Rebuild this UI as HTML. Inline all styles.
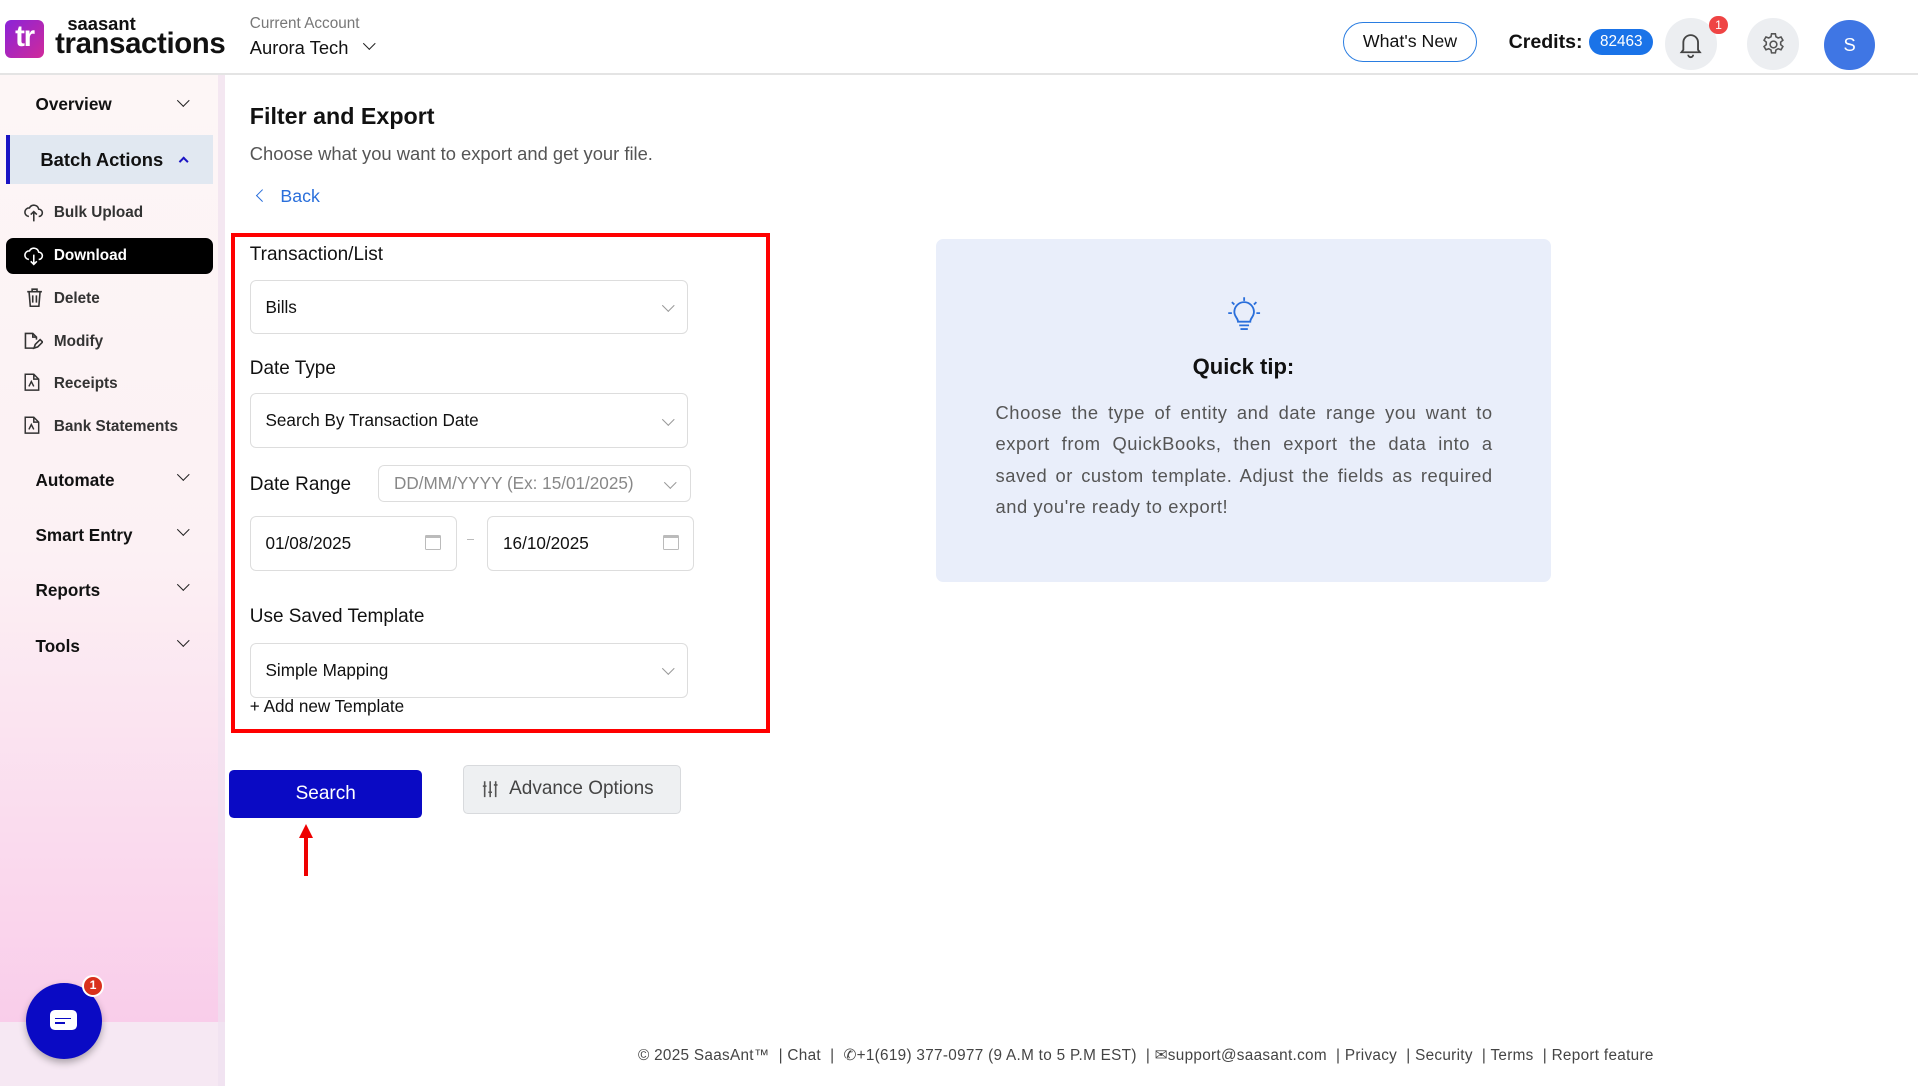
<!DOCTYPE html>
<html><head><meta charset="utf-8"><style>
*{box-sizing:border-box;margin:0;padding:0}
html,body{width:1920px;height:1086px;overflow:hidden;background:#fff}
#w{zoom:1.22449;width:1568px;height:887px;position:relative;font-family:"Liberation Sans",sans-serif;color:#111}
.a{position:absolute}
.side{left:0;top:61px;width:184px;height:774px;background:linear-gradient(#fdf6f6 0%,#fcf1f4 50%,#f9cdea 100%)}
.sideb{left:0;top:835px;width:184px;height:52px;background:#f6e8f3}
.strip{left:178px;top:61px;width:6px;height:826px;background:rgba(240,225,240,.7)}
.nav{font-weight:bold;font-size:14px;color:#111}
.chev{width:7px;height:7px;border-right:1.6px solid #222;border-bottom:1.6px solid #222;transform:rotate(45deg)}
.sub{font-size:12.5px;font-weight:bold;color:#333}
.lbl{font-size:15.5px;color:#111}
.sel{border:1px solid #ddd;border-radius:5px;background:#fff;font-size:14px;color:#111;padding-left:12px;display:flex;align-items:center}
.dd{position:absolute;right:12px;top:50%;width:7px;height:7px;border-right:1px solid #999;border-bottom:1px solid #999;transform:translateY(-70%) rotate(45deg)}
.cal{position:absolute;right:12px;top:15px;width:13px;height:12px;border:1px solid #bbb;border-top-width:3px;border-radius:1px}
.foot{font-size:12.5px;color:#444;letter-spacing:0.25px}
</style></head><body><div id="w">
<!-- header -->
<div class="a" style="left:0;top:60px;width:1566px;height:1px;background:#e4e4e4"></div>
<div class="a" style="left:4px;top:16px;width:32px;height:31px;border-radius:5px;background:linear-gradient(135deg,#8a23d8,#d02a9a);color:#fff;font-weight:bold;font-size:24px;line-height:28px;text-align:center;letter-spacing:-1px">tr</div>
<div class="a" style="left:55px;top:11px;font-size:15px;font-weight:bold;color:#111">saasant</div>
<div class="a" style="left:45px;top:22px;font-size:24px;font-weight:bold;color:#111;letter-spacing:-0.3px">transactions</div>
<div class="a" style="left:204px;top:12px;font-size:12.5px;color:#777">Current Account</div>
<div class="a" style="left:204px;top:30px;font-size:15px;color:#111">Aurora Tech</div>
<div class="a chev" style="left:298px;top:32px"></div>
<div class="a" style="left:1097px;top:18px;width:109px;height:33px;border:1px solid #2a7de1;border-radius:17px;font-size:14.5px;text-align:center;line-height:31px">What's New</div>
<div class="a" style="left:1232px;top:25px;font-size:16px;font-weight:bold">Credits:</div>
<div class="a" style="left:1298px;top:24px;width:52px;height:21px;border-radius:11px;background:#1a73e8;color:#fff;font-size:12.5px;text-align:center;line-height:21px">82463</div>
<div class="a" style="left:1360px;top:15px;width:42px;height:42px;border-radius:50%;background:#eceef1"></div>
<svg class="a" style="left:1369px;top:24px" width="24" height="24" viewBox="0 0 24 24" fill="none" stroke="#444" stroke-width="1.5"><path d="M6 17V11a6 6 0 0112 0v6l1.5 2h-15z"/><path d="M10 21a2 2 0 004 0"/></svg>
<div class="a" style="left:1396px;top:13px;width:15px;height:15px;border-radius:50%;background:#ef4444;color:#fff;font-size:10px;text-align:center;line-height:15px">1</div>
<div class="a" style="left:1427px;top:15px;width:42px;height:42px;border-radius:50%;background:#eceef1"></div>
<svg class="a" style="left:1437px;top:25px" width="22" height="22" viewBox="0 0 24 24" fill="none" stroke="#555" stroke-width="1.4"><circle cx="12" cy="12" r="3"/><path d="M10.3 2.5h3.4l.5 2.6 2 1.1 2.5-.9 1.7 2.9-2 1.7v2.2l2 1.7-1.7 2.9-2.5-.9-2 1.1-.5 2.6h-3.4l-.5-2.6-2-1.1-2.5.9-1.7-2.9 2-1.7v-2.2l-2-1.7 1.7-2.9 2.5.9 2-1.1z"/></svg>
<div class="a" style="left:1490px;top:16px;width:41px;height:41px;border-radius:50%;background:#3f76e4;color:#fff;font-size:15px;text-align:center;line-height:41px">S</div>
<!-- sidebar -->
<div class="a side"></div><div class="a sideb"></div><div class="a strip"></div>
<div class="a nav" style="left:29px;top:77px">Overview</div><div class="a chev" style="left:146px;top:78px"></div>
<div class="a" style="left:5px;top:110px;width:169px;height:40px;background:#e1e8f1;border-left:4px solid #1b14c4"></div>
<div class="a nav" style="left:33px;top:122px;font-size:15px">Batch Actions</div>
<div class="a" style="left:147px;top:129px;width:6px;height:6px;border-left:2px solid #1b14c4;border-top:2px solid #1b14c4;transform:rotate(45deg)"></div>
<svg class="a" style="left:20px;top:166px" width="16" height="16" viewBox="0 0 16 16" fill="none" stroke="#333" stroke-width="1.3"><path d="M4 11a3.5 3.5 0 01.5-7A4 4 0 0112 5a3 3 0 010 6M8 15V7M5.5 9.5L8 7l2.5 2.5"/></svg>
<div class="a sub" style="left:44px;top:167px">Bulk Upload</div>
<div class="a" style="left:5px;top:194px;width:169px;height:30px;background:#000;border-radius:6px"></div>
<svg class="a" style="left:20px;top:201px" width="16" height="16" viewBox="0 0 16 16" fill="none" stroke="#fff" stroke-width="1.3"><path d="M4 11a3.5 3.5 0 01.5-7A4 4 0 0112 5a3 3 0 010 6M8 7v8M5.5 12.5L8 15l2.5-2.5"/></svg>
<div class="a sub" style="left:44px;top:202px;color:#fff">Download</div>
<svg class="a" style="left:21px;top:235px" width="14" height="16" viewBox="0 0 14 16" fill="none" stroke="#333" stroke-width="1.3"><path d="M1 3h12M5 3V1h4v2M2.5 3l1 12h7l1-12M5.5 6v6M8.5 6v6"/></svg>
<div class="a sub" style="left:44px;top:237px">Delete</div>
<svg class="a" style="left:19px;top:270px" width="16" height="16" viewBox="0 0 16 16" fill="none" stroke="#333" stroke-width="1.3"><path d="M9 14H2V2h6l3 3v2M8 2v3h3M9 14l1-3 4-4 2 2-4 4z"/></svg>
<div class="a sub" style="left:44px;top:272px">Modify</div>
<svg class="a" style="left:20px;top:305px" width="13" height="15" viewBox="0 0 13 15" fill="none" stroke="#333" stroke-width="1.2"><path d="M1 1h7l4 4v9H1zM8 1v4h4M4 11l2-4 2 4"/></svg>
<div class="a sub" style="left:44px;top:306px">Receipts</div>
<svg class="a" style="left:20px;top:340px" width="13" height="15" viewBox="0 0 13 15" fill="none" stroke="#333" stroke-width="1.2"><path d="M1 1h7l4 4v9H1zM8 1v4h4M4 11l2-4 2 4"/></svg>
<div class="a sub" style="left:44px;top:341px">Bank Statements</div>
<div class="a nav" style="left:29px;top:384px">Automate</div><div class="a chev" style="left:146px;top:384px"></div>
<div class="a nav" style="left:29px;top:429px">Smart Entry</div><div class="a chev" style="left:146px;top:429px"></div>
<div class="a nav" style="left:29px;top:474px">Reports</div><div class="a chev" style="left:146px;top:474px"></div>
<div class="a nav" style="left:29px;top:519px">Tools</div><div class="a chev" style="left:146px;top:519px"></div>
<div class="a" style="left:21px;top:803px;width:62px;height:62px;border-radius:50%;background:#0a0ac4;box-shadow:0 3px 6px rgba(0,0,0,.3)"></div>
<div class="a" style="left:41px;top:825px;width:22px;height:16px;border-radius:4px;background:#fff"></div>
<div class="a" style="left:45px;top:831px;width:13px;height:1.5px;background:#0a0ac4"></div>
<div class="a" style="left:45px;top:835px;width:8px;height:1.5px;background:#0a0ac4"></div>
<div class="a" style="left:67px;top:796px;width:18px;height:18px;border-radius:50%;background:#d9301c;border:2px solid #fff;color:#fff;font-size:10px;font-weight:bold;text-align:center;line-height:14px">1</div>
<!-- main -->
<div class="a" style="left:204px;top:84px;font-size:19px;font-weight:bold">Filter and Export</div>
<div class="a" style="left:204px;top:117px;font-size:15px;color:#555">Choose what you want to export and get your file.</div>
<div class="a" style="left:211px;top:156px;width:7px;height:7px;border-left:1.3px solid #2a6fdb;border-bottom:1.3px solid #2a6fdb;transform:rotate(45deg)"></div>
<div class="a" style="left:229px;top:152px;font-size:14.5px;color:#2a6fdb">Back</div>
<div class="a" style="left:189px;top:190px;width:440px;height:409px;border:4px solid #f00"></div>
<div class="a lbl" style="left:204px;top:199px">Transaction/List</div>
<div class="a sel" style="left:204px;top:229px;width:358px;height:44px">Bills<span class="dd"></span></div>
<div class="a lbl" style="left:204px;top:292px">Date Type</div>
<div class="a sel" style="left:204px;top:321px;width:358px;height:45px">Search By Transaction Date<span class="dd"></span></div>
<div class="a lbl" style="left:204px;top:387px">Date Range</div>
<div class="a sel" style="left:309px;top:380px;width:255px;height:30px;color:#888">DD/MM/YYYY (Ex: 15/01/2025)<span class="dd"></span></div>
<div class="a sel" style="left:204px;top:421px;width:169px;height:45px">01/08/2025<span class="cal"></span></div>
<div class="a" style="left:381px;top:440px;width:6px;height:1px;background:#bbb"></div>
<div class="a sel" style="left:398px;top:421px;width:169px;height:45px">16/10/2025<span class="cal"></span></div>
<div class="a lbl" style="left:204px;top:495px">Use Saved Template</div>
<div class="a sel" style="left:204px;top:525px;width:358px;height:45px">Simple Mapping<span class="dd"></span></div>
<div class="a" style="left:204px;top:568px;font-size:14px">+ Add new Template</div>
<div class="a" style="left:187px;top:629px;width:158px;height:39px;border-radius:4px;background:#0a0ac4;color:#fff;font-size:15.5px;text-align:center;line-height:39px">Search</div>
<div class="a" style="left:248.5px;top:684px;width:3px;height:31px;background:#e00"></div>
<div class="a" style="left:244px;top:673px;width:0;height:0;border-left:6px solid transparent;border-right:6px solid transparent;border-bottom:12px solid #e00"></div>
<div class="a" style="left:378px;top:625px;width:178px;height:40px;border-radius:4px;background:#eef0f2;border:1px solid #d8dadd;font-size:15.5px;color:#444;line-height:38px;padding-left:37px">Advance Options</div>
<svg class="a" style="left:393px;top:637px" width="15" height="15" viewBox="0 0 15 15" fill="none" stroke="#555" stroke-width="1.3"><path d="M3 1v13M7.5 1v13M12 1v13M1.5 5h3M6 10h3M10.5 4h3"/></svg>
<!-- tip -->
<div class="a" style="left:764px;top:195px;width:503px;height:280px;border-radius:6px;background:#e9eefa"></div>
<svg class="a" style="left:1002px;top:242px" width="28" height="30" viewBox="0 0 28 30" fill="none" stroke="#2a6fdb" stroke-width="1.5"><path d="M14 1v3M4 5l2 2M24 5l-2 2M1 14h3M27 14h-3M9 21c0-3-3-4-3-8a8 8 0 0116 0c0 4-3 5-3 8zM10 24h8M11 27h6"/></svg>
<div class="a" style="left:764px;top:289px;width:503px;text-align:center;font-size:18px;font-weight:bold">Quick tip:</div>
<div class="a" style="left:813px;top:324px;width:406px;font-size:15px;line-height:25.7px;color:#555;text-align:justify;letter-spacing:0.45px">Choose the type of entity and date range you want to export from QuickBooks, then export the data into a saved or custom template. Adjust the fields as required and you're ready to export!</div>
<div class="a foot" style="left:521px;top:854px;white-space:nowrap">© 2025 SaasAnt™ &nbsp;| Chat &nbsp;| &nbsp;✆+1(619) 377-0977 (9 A.M to 5 P.M EST) &nbsp;| ✉support@saasant.com &nbsp;| Privacy &nbsp;| Security &nbsp;| Terms &nbsp;| Report feature</div>
</div></body></html>
